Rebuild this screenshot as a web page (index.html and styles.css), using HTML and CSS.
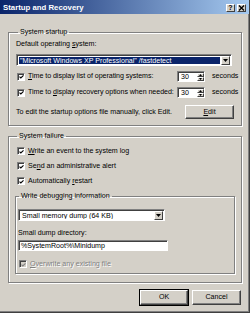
FILE: index.html
```html
<!DOCTYPE html>
<html>
<head>
<meta charset="utf-8">
<link rel="stylesheet" href="styles.css">
</head>
<body>
<div class="window">
  <div class="titlebar">
    <span class="title">Startup and Recovery</span>
    <div class="tb-btns">
      <span class="tb-btn">?</span>
      <span class="tb-btn close"><svg viewBox="0 0 7 6" width="7" height="6"><path d="M1 0.5L6 5.5M6 0.5L1 5.5" stroke="#000" stroke-width="1.3"/></svg></span>
    </div>
  </div>
  <div class="body">
    <fieldset class="group g-startup">
      <legend>System startup</legend>
      <div class="label l-default">Default operating <u>s</u>ystem:</div>
      <div class="combo wide">
        <div class="combo-text selected">"Microsoft Windows XP Professional" /fastdetect</div>
        <div class="drop-btn"><svg viewBox="0 0 5 3" width="5" height="3"><path d="M0 0H5L2.5 3Z" fill="#000"/></svg></div>
      </div>
      <div class="time-row">
        <div class="check-row"><span class="check"><svg viewBox="0 0 6 6" width="6" height="6"><path d="M0.6 2.6L2.2 4.2L5.4 1" stroke="#000" stroke-width="1.3" fill="none"/></svg></span><span class="tl"><u>T</u>ime to display list of operating systems:</span></div>
        <div class="spin"><span class="spin-text">30</span><div class="spin-btns"><span class="sb"><svg viewBox="0 0 3 2" width="3" height="2"><path d="M0 2H3L1.5 0Z" fill="#000"/></svg></span><span class="sb"><svg viewBox="0 0 3 2" width="3" height="2"><path d="M0 0H3L1.5 2Z" fill="#000"/></svg></span></div></div>
        <span class="secs">seconds</span>
      </div>
      <div class="time-row r2">
        <div class="check-row"><span class="check"><svg viewBox="0 0 6 6" width="6" height="6"><path d="M0.6 2.6L2.2 4.2L5.4 1" stroke="#000" stroke-width="1.3" fill="none"/></svg></span><span class="tl">Time to <u>d</u>isplay recovery options when needed:</span></div>
        <div class="spin"><span class="spin-text">30</span><div class="spin-btns"><span class="sb"><svg viewBox="0 0 3 2" width="3" height="2"><path d="M0 2H3L1.5 0Z" fill="#000"/></svg></span><span class="sb"><svg viewBox="0 0 3 2" width="3" height="2"><path d="M0 0H3L1.5 2Z" fill="#000"/></svg></span></div></div>
        <span class="secs">seconds</span>
      </div>
      <div class="edit-row">
        <span class="edit-text">To edit the startup options file manually, click Edit.</span>
        <span class="btn edit-btn"><u>E</u>dit</span>
      </div>
    </fieldset>

    <fieldset class="group g-failure">
      <legend>System failure</legend>
      <div class="check-row f1"><span class="check"><svg viewBox="0 0 6 6" width="6" height="6"><path d="M0.6 2.6L2.2 4.2L5.4 1" stroke="#000" stroke-width="1.3" fill="none"/></svg></span><span><u>W</u>rite an event to the system log</span></div>
      <div class="check-row f2"><span class="check"><svg viewBox="0 0 6 6" width="6" height="6"><path d="M0.6 2.6L2.2 4.2L5.4 1" stroke="#000" stroke-width="1.3" fill="none"/></svg></span><span>Se<u>n</u>d an administrative alert</span></div>
      <div class="check-row f2"><span class="check"><svg viewBox="0 0 6 6" width="6" height="6"><path d="M0.6 2.6L2.2 4.2L5.4 1" stroke="#000" stroke-width="1.3" fill="none"/></svg></span><span>Automatically <u>r</u>estart</span></div>

      <fieldset class="group g-debug">
        <legend>Write debugging information</legend>
        <div class="combo dump">
          <div class="combo-text">Small memory dump (64 KB)</div>
          <div class="drop-btn"><svg viewBox="0 0 5 3" width="5" height="3"><path d="M0 0H5L2.5 3Z" fill="#000"/></svg></div>
        </div>
        <div class="label l-dir">Small dump directory:</div>
        <div class="textbox">%SystemRoot%\Minidump</div>
        <div class="check-row disabled"><span class="check"><svg viewBox="0 0 6 6" width="6" height="6"><path d="M0.6 2.6L2.2 4.2L5.4 1" stroke="#808080" stroke-width="1.3" fill="none"/></svg></span><span><u>O</u>verwrite any existing file</span></div>
      </fieldset>
    </fieldset>

    <div class="buttons">
      <span class="btn ok">OK</span>
      <span class="btn cancel">Cancel</span>
    </div>
  </div>
</div>
</body>
</html>
```

FILE: styles.css
```css
html, body {
  margin: 0;
  padding: 0;
}
body {
  width: 250px;
  height: 313px;
  overflow: hidden;
  font-family: "Liberation Sans", Arial, sans-serif;
  font-size: 7.1px;
  color: #000;
}
.window {
  box-sizing: border-box;
  width: 250px;
  height: 313px;
  background: #D4D0C8;
  border-right: 1px solid #404040;
  border-bottom: 1px solid #404040;
  box-shadow: inset -1px -1px 0 #808080;
  display: flex;
  flex-direction: column;
}
.titlebar {
  height: 14px;
  flex: none;
  background: linear-gradient(to right, #0A246A, #A6CAF0);
  display: flex;
  align-items: center;
  justify-content: space-between;
  padding: 0 3px 0 3px;
}
.title {
  color: #fff;
  font-weight: bold;
  font-size: 7.8px;
  line-height: 9px;
}
.tb-btns {
  display: flex;
  gap: 2px;
  margin-top: 1px;
}
.tb-btn {
  box-sizing: border-box;
  width: 9px;
  height: 8px;
  background: #D4D0C8;
  border: 1px solid;
  border-color: #fff #404040 #404040 #fff;
  font-weight: bold;
  font-size: 7px;
  line-height: 6px;
  text-align: center;
  display: flex;
  align-items: center;
  justify-content: center;
}
.body {
  flex: 1;
  padding: 0 7px 0 8px;
  display: flex;
  flex-direction: column;
}
fieldset.group {
  margin: 0;
  border: 1px solid #808080;
  box-shadow: 1px 1px 0 #fff, inset 1px 1px 0 #fff;
  min-width: 0;
}
fieldset.group legend {
  padding: 0 2px;
  margin-left: 2px;
  line-height: 9px;
}
.g-startup {
  margin-top: 14px !important;
  padding: 0 6px 6px 7px;
}
.label {
  line-height: 9px;
  height: 9px;
}
.l-default {
  margin-top: 3px;
}
u {
  text-decoration: underline;
  text-underline-offset: 1px;
}
.combo {
  box-sizing: border-box;
  height: 12px;
  background: #fff;
  border: 1px solid;
  border-color: #808080 #fff #fff #808080;
  box-shadow: inset 1px 1px 0 #404040;
  display: flex;
  align-items: stretch;
  padding: 1px 1px 0 1px;
}
.combo.wide {
  margin-top: 5px;
  margin-right: 3px;
}
.combo-text {
  flex: 1;
  line-height: 8px;
  padding: 0 1px;
  margin: 1px 1px 1px 1px;
  white-space: nowrap;
  overflow: hidden;
}
.combo-text.selected {
  background: #0A246A;
  color: #fff;
}
.drop-btn {
  box-sizing: border-box;
  width: 9px;
  background: #D4D0C8;
  border: 1px solid;
  border-color: #fff #404040 #404040 #fff;
  display: flex;
  align-items: center;
  justify-content: center;
}
.time-row {
  display: grid;
  grid-template-columns: 161px 28px auto;
  align-items: center;
  margin-top: 5px;
  height: 11px;
}
.time-row.r2 {
  margin-top: 5px;
}
.tl {
  letter-spacing: -0.05px;
}
.check-row {
  display: flex;
  align-items: center;
  gap: 3px;
  height: 10px;
  line-height: 9px;
  padding-left: 1px;
  white-space: nowrap;
}
.check {
  box-sizing: border-box;
  width: 8px;
  height: 8px;
  flex: none;
  background: #fff;
  border: 1px solid;
  border-color: #808080 #fff #fff #808080;
  box-shadow: inset 1px 1px 0 #404040;
  display: flex;
  align-items: center;
  justify-content: center;
  padding: 1px 0 0 1px;
}
.spin {
  box-sizing: border-box;
  height: 11px;
  background: #fff;
  border: 1px solid;
  border-color: #808080 #fff #fff #808080;
  box-shadow: inset 1px 1px 0 #404040;
  display: flex;
  padding: 1px 0 0 1px;
}
.spin-text {
  flex: 1;
  line-height: 8px;
  padding-left: 2px;
}
.spin-btns {
  width: 7px;
  display: flex;
  flex-direction: column;
}
.sb {
  flex: 1;
  box-sizing: border-box;
  background: #D4D0C8;
  border: 1px solid;
  border-color: #fff #404040 #404040 #fff;
  display: flex;
  align-items: center;
  justify-content: center;
}
.secs {
  padding-left: 7px;
  line-height: 9px;
}
.edit-row {
  display: flex;
  align-items: center;
  justify-content: space-between;
  margin-top: 7px;
  padding-right: 1px;
}
.edit-text {
  line-height: 9px;
}
.btn {
  box-sizing: border-box;
  display: flex;
  align-items: center;
  justify-content: center;
  background: #D4D0C8;
  border: 1px solid;
  border-color: #fff #404040 #404040 #fff;
  box-shadow: inset -1px -1px 0 #808080;
  line-height: 9px;
}
.edit-btn {
  width: 49px;
  height: 14px;
}
.g-failure {
  margin-top: 6px !important;
  padding: 0 6px 8px 6px;
}
.check-row.f1 {
  margin-top: 5px;
  padding-left: 2px;
}
.check-row.f2 {
  margin-top: 5px;
  padding-left: 2px;
}
.g-debug {
  margin-top: 6px !important;
  padding: 0 6px 4px 2px;
}
.g-debug legend {
  margin-left: 1px !important;
}
.combo.dump {
  width: 147px;
  margin-top: 8px;
}
.l-dir {
  margin-top: 8px;
}
.textbox {
  box-sizing: border-box;
  width: 150px;
  height: 11px;
  margin-top: 2px;
  background: #fff;
  border: 1px solid;
  border-color: #808080 #fff #fff #808080;
  box-shadow: inset 1px 1px 0 #404040;
  line-height: 8px;
  padding: 1px 0 0 2px;
  white-space: nowrap;
}
.check-row.disabled {
  margin-top: 8px;
  color: #808080;
  text-shadow: 1px 1px 0 #fff;
}
.check-row.disabled .check {
  background: #D4D0C8;
}
.buttons {
  display: flex;
  justify-content: flex-end;
  gap: 4px;
  margin-top: 7px;
  padding-right: 1px;
}
.ok {
  width: 48px;
  height: 15px;
  outline: 1px solid #000;
  outline-offset: 0;
}
.cancel {
  width: 49px;
  height: 15px;
}
```
